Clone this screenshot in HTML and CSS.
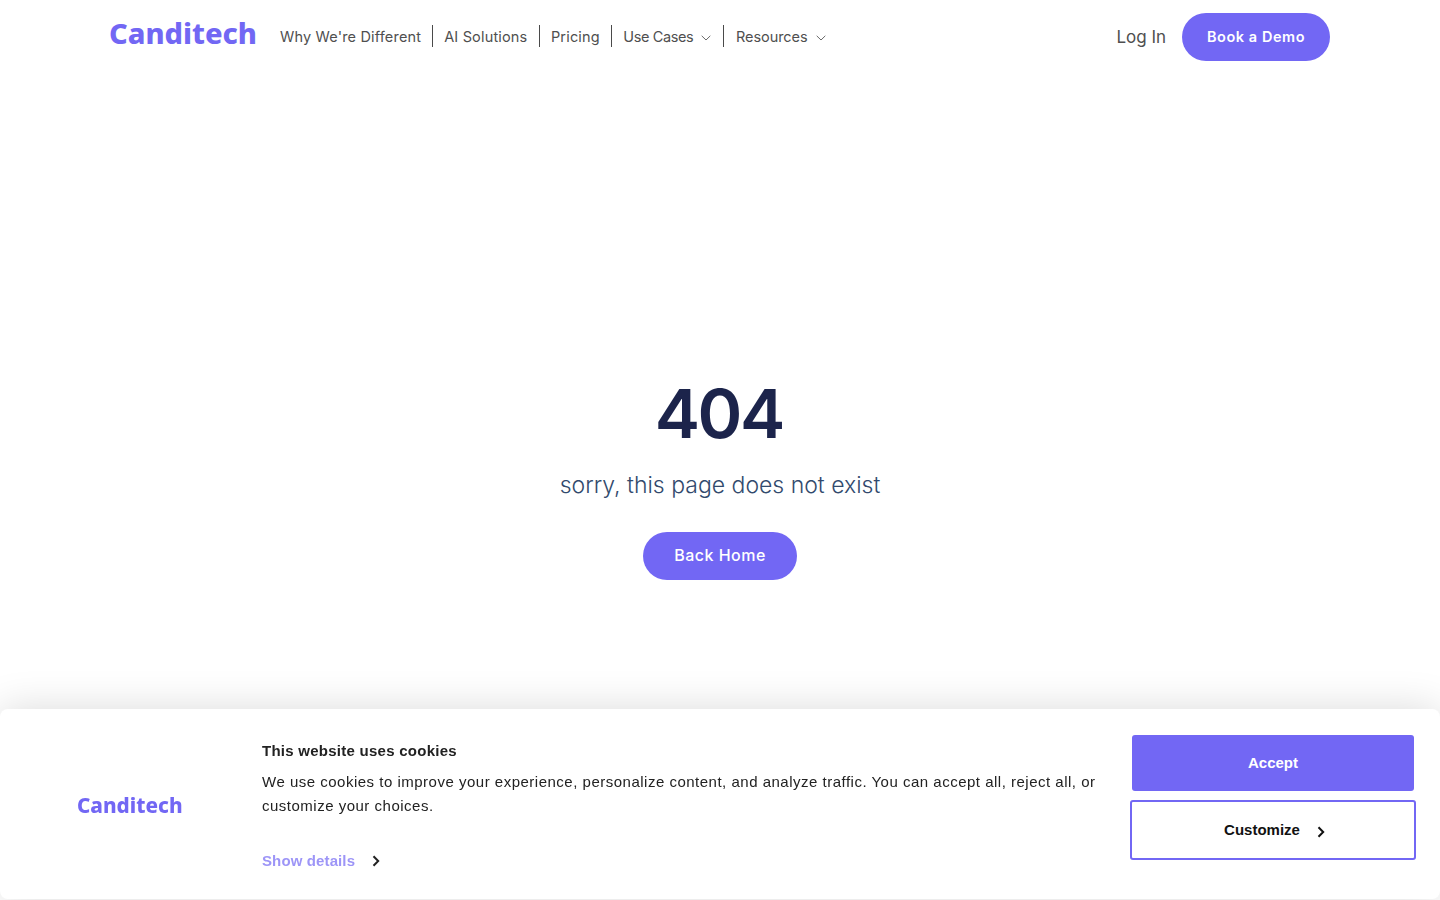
FILE: index.html
```html
<!DOCTYPE html>
<html lang="en">
<head>
<meta charset="utf-8">
<title>Canditech</title>
<link rel="stylesheet" href="styles.css">
</head>
<body>
<header class="header">
  <a class="logo" href="#">Canditech</a>
  <nav class="nav">
    <a class="nav-link" href="#">Why We're Different</a>
    <a class="nav-link" href="#">AI Solutions</a>
    <a class="nav-link" href="#">Pricing</a>
    <a class="nav-link nav-use" href="#">Use Cases
      <svg class="caret" width="10" height="6" viewBox="0 0 10 6"><path d="M.7.8 5 5l4.3-4.2" fill="none" stroke="#6b6b6b" stroke-width="1"/></svg>
    </a>
    <a class="nav-link nav-res" href="#">Resources
      <svg class="caret" width="10" height="6" viewBox="0 0 10 6"><path d="M.7.8 5 5l4.3-4.2" fill="none" stroke="#6b6b6b" stroke-width="1"/></svg>
    </a>
  </nav>
  <div class="actions">
    <a class="login" href="#">Log In</a>
    <a class="demo" href="#">Book a Demo</a>
  </div>
</header>
<main class="main">
  <h1 class="code">404</h1>
  <p class="message">sorry, this page does not exist</p>
  <a class="home" href="#">Back Home</a>
</main>
<aside class="cookie">
  <div class="cookie-logo"><span class="logo-small">Canditech</span></div>
  <div class="cookie-body">
    <h2 class="cookie-title">This website uses cookies</h2>
    <p class="cookie-text">We use cookies to improve your experience, personalize content, and analyze traffic. You can accept all, reject all, or customize your choices.</p>
    <a class="details" href="#">Show details
      <svg class="chev" width="8" height="12" viewBox="0 0 8 12"><path d="M1.5 1.2 6.2 6l-4.7 4.8" fill="none" stroke="#222" stroke-width="2"/></svg>
    </a>
  </div>
  <div class="cookie-actions">
    <button class="accept">Accept</button>
    <button class="customize">Customize
      <svg class="chev chev-c" width="8" height="12" viewBox="0 0 8 12"><path d="M1.5 1.2 6.2 6l-4.7 4.8" fill="none" stroke="#111" stroke-width="2"/></svg>
    </button>
  </div>
</aside>
</body>
</html>
```
FILE: styles.css
```css
* { box-sizing: border-box; }
html, body { height: 100%; }
body {
  margin: 0;
  background: #fff;
  font-family: "Inter", "Liberation Sans", sans-serif;
  overflow: hidden;
}
a { text-decoration: none; color: inherit; }

.header {
  display: flex;
  align-items: center;
  height: 74px;
  padding: 0 110px 0 109px;
}
.logo {
  font-family: "Noto Sans", sans-serif;
  font-weight: 800;
  font-size: 29px;
  line-height: 36px;
  color: #7267f4;
  width: 171px;
  margin-top: -8px;
}
.nav { display: flex; align-items: center; margin-bottom: 2px; }
.nav-link {
  display: flex;
  align-items: center;
  height: 22px;
  padding: 0 11.5px 0 11px;
  border-right: 1px solid #4a4a4a;
  font-size: 14.5px;
  letter-spacing: .17px;
  color: #4f4f4f;
  white-space: nowrap;
}
.nav-link:first-child { padding-left: 0; padding-right: 11px; }
.nav-link:last-child { border-right: 0; }
.nav-use { letter-spacing: -.38px; }
.nav-res { letter-spacing: -.05px; padding-left: 12px; }
.caret { margin-left: 8px; margin-top: 3px; }
.actions {
  display: flex;
  align-items: center;
  gap: 16px;
  margin-left: auto;
}
.login { font-size: 17px; color: #4f4f4f; }
.demo {
  display: flex;
  align-items: center;
  justify-content: center;
  width: 148px;
  height: 48px;
  padding-bottom: 2px;
  border-radius: 24px;
  background: #7267f4;
  color: #fff;
  font-size: 14.5px;
  font-weight: 600;
  letter-spacing: .55px;
}

.main {
  display: flex;
  flex-direction: column;
  align-items: center;
  padding-top: 300px;
}
.code {
  margin: 0 0 0 -2.5px;
  font-size: 68px;
  line-height: 78px;
  font-weight: 600;
  letter-spacing: -2.5px;
  color: #1c244b;
}
.message {
  margin: 16px 0 0;
  font-size: 23px;
  line-height: 34px;
  font-weight: 300;
  color: #324a6d;
}
.home {
  display: flex;
  align-items: center;
  justify-content: center;
  width: 154px;
  height: 48px;
  margin-top: 30px;
  padding-bottom: 2px;
  border-radius: 24px;
  background: #7267f4;
  color: #fff;
  font-size: 16px;
  font-weight: 500;
  letter-spacing: .5px;
}

.cookie {
  position: fixed;
  left: 0;
  right: 0;
  bottom: 1px;
  height: 190px;
  display: flex;
  background: #fff;
  border-radius: 8px;
  box-shadow: 0 0 40px rgba(0, 0, 0, .15);
  font-family: "Liberation Sans", Arial, sans-serif;
}
.cookie-logo {
  flex: none;
  width: 262px;
  display: flex;
  align-items: center;
  padding: 0 0 0 77px;
}
.logo-small {
  font-family: "Noto Sans", sans-serif;
  font-weight: 800;
  font-size: 20.7px;
  color: #7267f4;
  margin-top: 2px;
}
.cookie-body { width: 840px; padding-top: 33px; }
.cookie-title {
  margin: 0;
  font-size: 15px;
  line-height: 18px;
  font-weight: 700;
  letter-spacing: .26px;
  color: #222;
}
.cookie-text {
  margin: 10px 0 0;
  font-size: 15px;
  line-height: 24px;
  letter-spacing: .5px;
  color: #222;
}
.details {
  display: flex;
  align-items: center;
  margin-top: 34px;
  font-size: 15px;
  line-height: 18px;
  font-weight: 700;
  letter-spacing: .12px;
  color: #9d95f7;
}
.chev { margin-left: 17px; }
.cookie-actions {
  margin-left: auto;
  margin-right: 24px;
  padding-top: 26px;
  display: flex;
  flex-direction: column;
  align-items: center;
  gap: 9px;
}
.accept, .customize {
  font-family: inherit;
  font-size: 15px;
  font-weight: 700;
  border-radius: 3px;
  cursor: pointer;
}
.accept {
  width: 282px;
  height: 56px;
  padding-bottom: 3px;
  border: 0;
  background: #7267f4;
  color: #fff;
}
.customize {
  width: 286px;
  height: 60px;
  border: 2px solid #7267f4;
  background: #fff;
  color: #111;
  display: flex;
  align-items: center;
  justify-content: center;
  padding: 0 0 2px 3px;
}
.chev-c { margin-top: 5px; margin-left: 17px; }
```
